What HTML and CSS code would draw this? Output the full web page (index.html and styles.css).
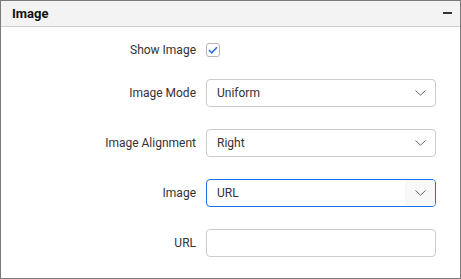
FILE: index.html
```html
<!DOCTYPE html>
<html lang="en">
<head>
    <meta charset="UTF-8">
    <title>Image properties</title>
    <link rel="stylesheet" href="styles.css">
</head>
<body>
    <div class="panel">
        <div class="panel-head">
            <span class="panel-title">Image</span>
            <span class="collapse"></span>
        </div>
        <div class="panel-body">
            <div class="row row-check">
                <label class="label">Show Image</label>
                <span class="checkbox">
                    <svg width="10" height="8" viewBox="0 0 10 8"><path d="M1 4.2 L3.8 6.8 L9 1.2" fill="none" stroke="#2f6fed" stroke-width="1.6"/></svg>
                </span>
            </div>
            <div class="row">
                <label class="label">Image Mode</label>
                <div class="select"><span>Uniform</span><span class="chev"><svg width="11" height="6" viewBox="0 0 11 6"><path d="M0.5 0.5 L5.5 5.2 L10.5 0.5" fill="none" stroke="#666" stroke-width="1"/></svg></span></div>
            </div>
            <div class="row">
                <label class="label">Image Alignment</label>
                <div class="select"><span>Right</span><span class="chev"><svg width="11" height="6" viewBox="0 0 11 6"><path d="M0.5 0.5 L5.5 5.2 L10.5 0.5" fill="none" stroke="#666" stroke-width="1"/></svg></span></div>
            </div>
            <div class="row">
                <label class="label">Image</label>
                <div class="select focused"><span>URL</span><span class="chev"><svg width="11" height="6" viewBox="0 0 11 6"><path d="M0.5 0.5 L5.5 5.2 L10.5 0.5" fill="none" stroke="#666" stroke-width="1"/></svg></span></div>
            </div>
            <div class="row">
                <label class="label">URL</label>
                <div class="input"></div>
            </div>
        </div>
    </div>
</body>
</html>
```

FILE: styles.css
```css
* { margin: 0; padding: 0; box-sizing: border-box; }
body {
    font-family: Roboto, "Liberation Sans", sans-serif;
    background: #fff;
    color: #333;
}
.panel {
    width: 461px;
    height: 279px;
    border: 1px solid #7a7a7a;
    background: #fff;
}
.panel-head {
    height: 26px;
    background: #f3f3f3;
    border-bottom: 1px solid #cfcfcf;
    display: flex;
    align-items: center;
    justify-content: space-between;
    padding: 0 8px 1px 11px;
}
.panel-title {
    font-size: 13px;
    font-weight: bold;
    color: #111;
}
.collapse {
    width: 9px;
    height: 2px;
    background: #333;
}
.panel-body {
    padding: 8px 24px 0 0;
}
.row {
    display: flex;
    align-items: center;
    height: 50px;
}
.row-check { height: 29px; margin-bottom: 4px; }
.label {
    width: 205px;
    padding-right: 10px;
    text-align: right;
    font-size: 12px;
    color: #333;
}
.checkbox {
    width: 14px;
    height: 14px;
    border: 1px solid #b5b5b5;
    border-radius: 3px;
    display: flex;
    align-items: center;
    justify-content: center;
}
.select, .input {
    width: 230px;
    height: 28px;
    border: 1px solid #cbcbcb;
    border-radius: 4px;
    display: flex;
    align-items: center;
    justify-content: space-between;
    font-size: 12px;
    color: #333;
    padding-left: 10px;
    overflow: hidden;
}
.select.focused { border-color: #1b6fe8; }
.chev {
    width: 30px;
    height: 100%;
    display: flex;
    align-items: center;
    justify-content: center;
}
.focused .chev { background: #f8f8f8; }
```
